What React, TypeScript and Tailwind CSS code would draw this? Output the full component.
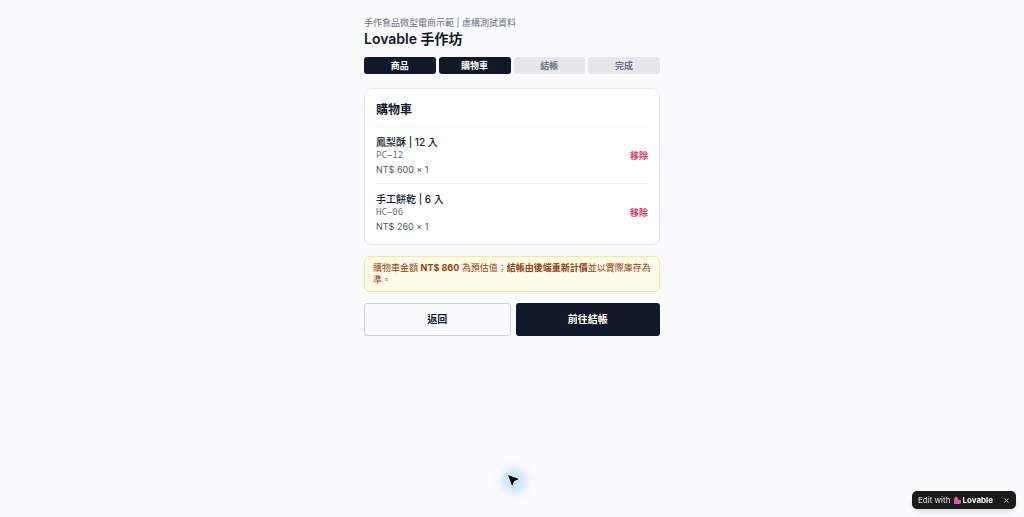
import React, { useState } from 'react';
import { X } from 'lucide-react';

interface CartItem {
  sku: string;
  name: string;
  price: number;
  qty: number;
}

const STEPS = ['商品', '購物車', '結帳', '完成'];
const CURRENT_STEP = 1;

const INITIAL_ITEMS: CartItem[] = [
  { sku: 'PC−12', name: '鳳梨酥 | 12 入', price: 600, qty: 1 },
  { sku: 'HC−06', name: '手工餅乾 | 6 入', price: 260, qty: 1 },
];

const StepBar: React.FC = () => (
  <ol className="mt-2 grid grid-cols-4 gap-[3px]">
    {STEPS.map((step, i) => (
      <li
        key={step}
        className={`rounded-[3px] text-center text-[9px] leading-[17px] font-semibold ${i <= CURRENT_STEP ? 'bg-[#111827] text-white' : 'bg-[#e5e7eb] text-[#6b7280]'}`}
      >
        {step}
      </li>
    ))}
  </ol>
);

const CartRow: React.FC<{ item: CartItem; onRemove: () => void }> = ({ item, onRemove }) => (
  <li className="flex items-center justify-between border-t border-[#f3f4f6] pt-2 pb-[7px]">
    <div>
      <div className="text-[10px] leading-[14px] font-medium">{item.name}</div>
      <div className="font-['DejaVu_Sans_Mono','Liberation_Mono',monospace] text-[9px] leading-3 text-[#6b7280]">{item.sku}</div>
      <div className="mt-[3px] text-[9px] leading-3 text-[#4b5563]">{`NT$ ${item.price} × ${item.qty}`}</div>
    </div>
    <button type="button" onClick={onRemove} className="text-[9px] leading-3 font-semibold text-[#d9376a]">
      移除
    </button>
  </li>
);

const LovableMark: React.FC = () => (
  <svg viewBox="0 0 16 16" className="h-[7px] w-[7px]" aria-hidden="true">
    <defs>
      <linearGradient id="heart" x1="0.2" y1="0" x2="0.5" y2="1">
        <stop offset="0.1" stopColor="#ff6a3c" />
        <stop offset="0.5" stopColor="#fb4c86" />
        <stop offset="1" stopColor="#a06cff" />
      </linearGradient>
    </defs>
    <path d="M0 5a5 5 0 0 1 9.500-2v3.500h2a4.700 4.700 0 0 1 0 9.500H0Z" fill="url(#heart)" />
  </svg>
);

// Small "Edit with Lovable" badge pinned to the corner
const EditBadge: React.FC = () => (
  <div className="fixed right-2 bottom-2 flex h-[18px] items-center rounded-[5px] bg-[#1b1b1b] px-1.5 text-white shadow-md">
    <a href="#edit" className="flex items-center text-[8px] leading-3 text-gray-200">
      Edit with
      <span className="ml-1 flex items-center gap-px font-bold text-white">
        <LovableMark />
        Lovable
      </span>
    </a>
    <button type="button" aria-label="Close" className="ml-2.5 text-gray-300">
      <X size={7} strokeWidth={3} />
    </button>
  </div>
);

const Pointer: React.FC = () => (
  <div className="pointer-events-none absolute top-[475px] left-1/2 -ml-1 h-3 w-3">
    <div className="absolute -inset-1.5 rounded-full bg-blue-400/30 blur-[5px]" />
    <svg viewBox="0 0 12 12" className="relative h-3 w-3 overflow-visible">
      <path d="M0 0 11 4 6.200 6.200 4 11Z" fill="#000" stroke="#fff" strokeWidth="1.600" strokeLinejoin="round" paintOrder="stroke" />
    </svg>
  </div>
);

export default function App() {
  const [items, setItems] = useState<CartItem[]>(INITIAL_ITEMS);
  const total = items.reduce((sum, item) => sum + item.price * item.qty, 0);

  return (
    <div lang="zh-Hant" className="relative min-h-screen bg-[#f9fbfd] font-['Inter','Noto_Sans_CJK_TC',sans-serif] text-[#111827]">
      <main className="mx-auto max-w-[296px] pt-[17px] pb-8">
        <header>
          <p className="text-[9px] leading-3 text-[#6b7280]">手作食品微型電商示範 | 虛構測試資料</p>
          <h1 className="text-[14px] leading-5 font-semibold">Lovable 手作坊</h1>
          <StepBar />
        </header>

        <section className="mt-3.5 rounded-lg border border-[#e5e7eb] bg-white px-[11px] pt-[13px] pb-1">
          <h2 className="mb-2 text-[12px] leading-4 font-semibold">購物車</h2>
          <ul>
            {items.map((item) => (
              <CartRow
                key={item.sku}
                item={item}
                onRemove={() => setItems(items.filter((i) => i.sku !== item.sku))}
              />
            ))}
          </ul>
        </section>

        <p className="mt-[11px] rounded-md border border-[#fde98a] bg-[#fffbeb] py-[5px] pr-1 pl-2 text-[9px] leading-3 text-[#92400e]">
          購物車金額 <strong>{`NT$ ${total}`}</strong> 為預估值；<strong>結帳由後端重新計價</strong>並以實際庫存為準。
        </p>

        <div className="mt-[11px] flex gap-[5px] text-[10px] font-semibold">
          <button type="button" className="h-[33px] flex-1 rounded-[3px] border border-[#d1d5db]">
            返回
          </button>
          <button type="button" className="h-[33px] flex-1 rounded-[3px] bg-[#111827] text-white">
            前往結帳
          </button>
        </div>
      </main>

      <Pointer />
      <EditBadge />
    </div>
  );
}
